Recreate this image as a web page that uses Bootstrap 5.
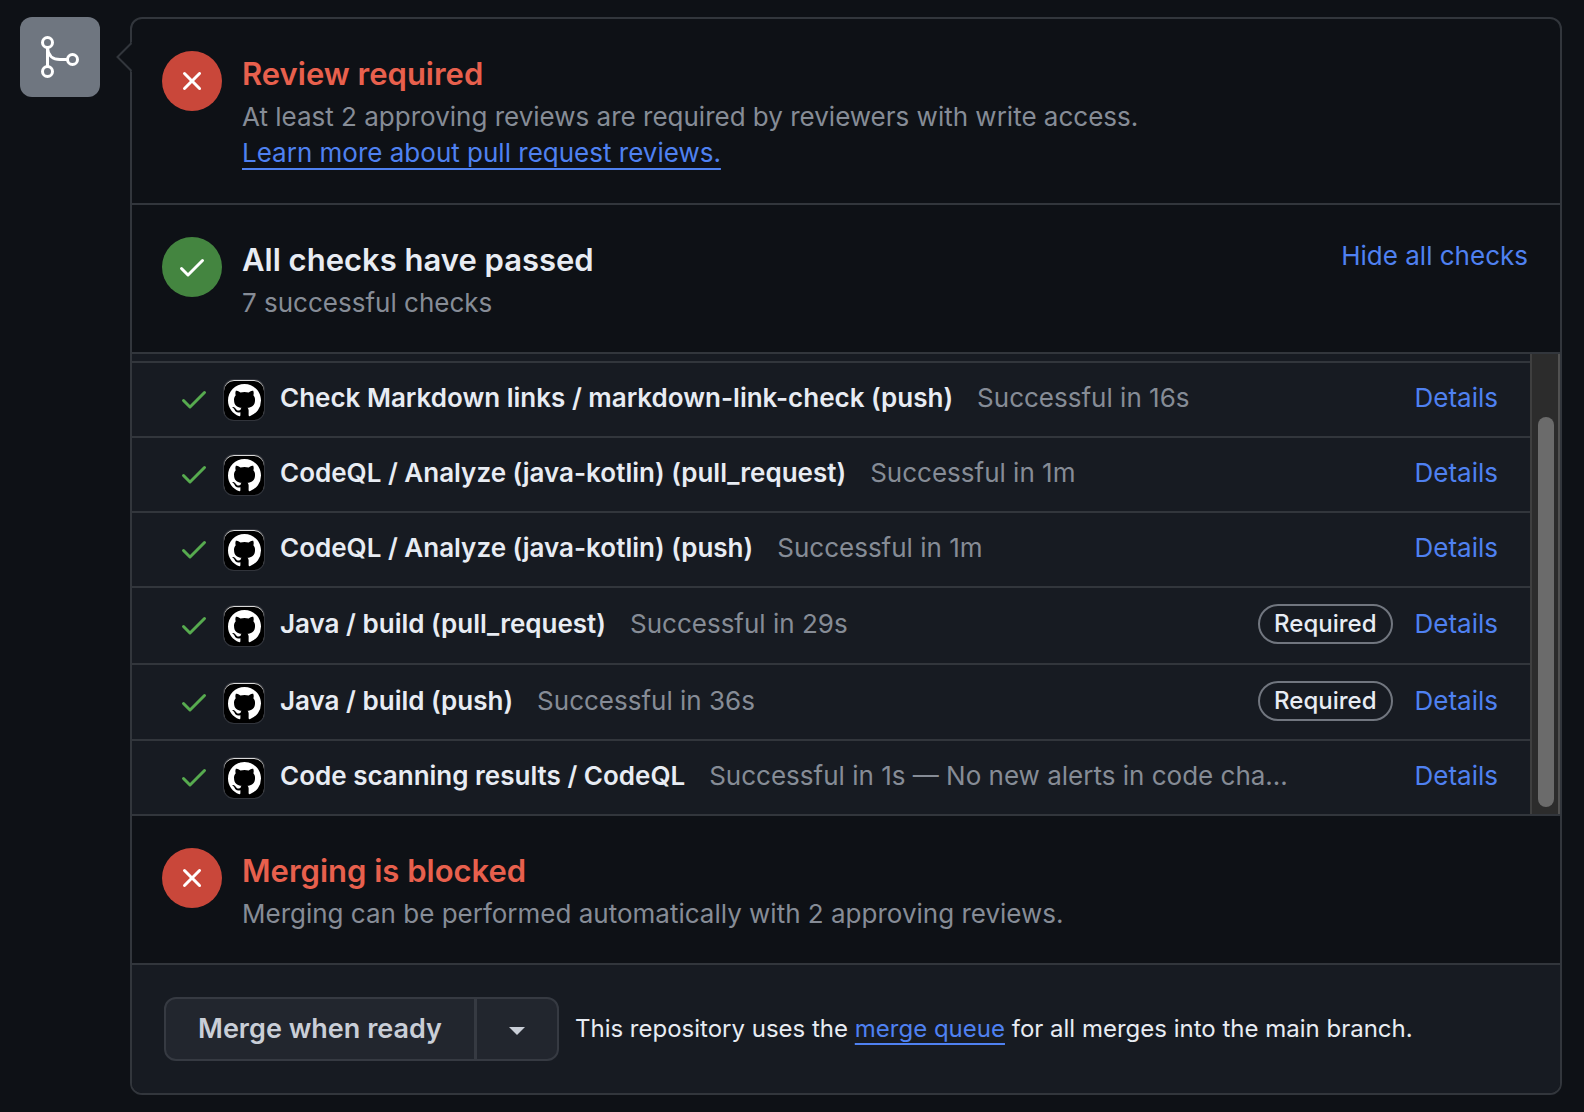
<!DOCTYPE html>
<html lang="en" data-bs-theme="dark">
<head>
<meta charset="utf-8">
<meta name="viewport" content="width=device-width, initial-scale=1">
<title>Merge status</title>
<link href="https://cdn.jsdelivr.net/npm/bootstrap@5.3.0/dist/css/bootstrap.min.css" rel="stylesheet">
<style>
  :root { --line: #32363c; --canvas: #0e1116; --inset: #171b22; --fg: #e8ecf3; --muted: #868c96; --blue: #4f81f1; --red: #e8604d; }
  body { background: var(--canvas); color: var(--fg); font-family: Inter, "Liberation Sans", sans-serif; font-size: 26px; line-height: 36px; }
  a { color: var(--blue); text-decoration: none; }
  a:hover { color: var(--blue); text-decoration: underline; }
  .timeline { padding: 17px 22px 17px 20px; gap: 30px; }
  .type-tile { width: 80px; height: 80px; border-radius: 12px; background: #6f7680; color: #fff; }
  .merge-panel { border: 2px solid var(--line); border-radius: 12px; min-width: 0; }
  .panel-caret { position: absolute; left: -16px; top: 23px; }
  .status-block { padding: 32px 32px 31px 30px; gap: 20px; border-bottom: 2px solid var(--line); }
  .status-dot { width: 60px; height: 60px; color: #fff; }
  .dot-red { background: #c9473a; }
  .dot-green { background: #448540; }
  .status-title { color: var(--fg); font-size: 31px; line-height: 46px; font-weight: 600; margin: 0 0 2px; }
  .title-red { color: var(--red); }
  .head-link { line-height: 38px; }
  .muted-text { color: var(--muted); }
  .ruled-link { text-decoration: underline; text-decoration-thickness: 2px; text-underline-offset: 6px; text-decoration-skip-ink: none; }
  .more-line { padding-bottom: 1px; }
  .checks { background: var(--inset); border-bottom: 2px solid var(--line); }
  .row-remnant { height: 7px; }
  .check-row { border-top: 2px solid var(--line); padding: 17px 32px 16px 46px; }
  .check-row.needed { padding-top: 18px; padding-bottom: 17px; }
  .check-row.needed + .needed { padding-bottom: 16px; }
  .check-icon { height: 38px; width: 32px; margin-right: 14px; color: #57ab4f; }
  .app-icon { width: 40px; height: 40px; border-radius: 10px; background: #000; color: #fff; margin-right: 16px; box-shadow: 0 0 0 1px #31343b, inset 0 1px 0 #d8d8d8; }
  .check-name { font-weight: 600; margin-right: 24px; }
  .check-side { gap: 22px; }
  .required-pill { font-size: 24px; line-height: 36px; font-weight: 500; border: 2px solid #71767f; padding: 0 14px; margin: -2px 0; }
  .scroll-track { width: 30px; background: #2c2c2c; border: solid #3f3f3f; border-width: 0 2px; border-right-color: #515151; padding: 63px 0 7px 6px; }
  .scroll-thumb { width: 16px; border-radius: 8px; background: #6b6b6b; }
  .merge-foot { background: var(--inset); padding: 32px; gap: 16px; font-size: 24px; border-radius: 0 0 10px 10px; }
  .merge-btn { --bs-btn-color: #c9ced7; --bs-btn-bg: #22262e; --bs-btn-border-color: #363a42; --bs-btn-hover-bg: #2d323b; --bs-btn-hover-color: #fff; --bs-btn-hover-border-color: #565b64; --bs-btn-border-width: 2px; --bs-btn-border-radius: 12px; --bs-btn-font-size: 27px; --bs-btn-font-weight: 600; --bs-btn-line-height: 36px; --bs-btn-padding-x: 32px; --bs-btn-padding-y: 12px; }
  .btn-group > .merge-btn:not(:first-child) { margin-left: -2px; }
</style>
</head>
<body>
<svg class="d-none" xmlns="http://www.w3.org/2000/svg">
  <symbol id="i-check" viewBox="0 0 16 16"><path fill="currentColor" d="M13.78 4.22a.75.75 0 0 1 0 1.06l-7.25 7.25a.75.75 0 0 1-1.06 0L2.22 9.28a.751.751 0 0 1 .018-1.042.751.751 0 0 1 1.042-.018L6 10.94l6.72-6.72a.75.75 0 0 1 1.06 0Z"/></symbol>
  <symbol id="i-x" viewBox="0 0 16 16"><path fill="currentColor" d="M3.72 3.72a.75.75 0 0 1 1.06 0L8 6.94l3.22-3.22a.749.749 0 0 1 1.275.326.749.749 0 0 1-.215.734L9.06 8l3.22 3.22a.749.749 0 0 1-.326 1.275.749.749 0 0 1-.734-.215L8 9.06l-3.22 3.22a.751.751 0 0 1-1.042-.018.751.751 0 0 1-.018-1.042L6.94 8 3.72 4.78a.75.75 0 0 1 0-1.06Z"/></symbol>
  <symbol id="i-mark" viewBox="0 0 16 16"><path fill="currentColor" d="M8 0C3.58 0 0 3.58 0 8c0 3.54 2.29 6.53 5.47 7.59.4.07.55-.17.55-.38 0-.19-.01-.82-.01-1.49-2.01.37-2.53-.49-2.69-.94-.09-.23-.48-.94-.82-1.13-.28-.15-.68-.52-.01-.53.63-.01 1.08.58 1.23.82.72 1.21 1.87.87 2.33.66.07-.52.28-.87.51-1.07-1.78-.2-3.64-.89-3.64-3.95 0-.87.31-1.59.82-2.15-.08-.2-.36-1.02.08-2.12 0 0 .67-.21 2.2.82.64-.18 1.32-.27 2-.27s1.36.09 2 .27c1.53-1.04 2.2-.82 2.2-.82.44 1.1.16 1.92.08 2.12.51.56.82 1.27.82 2.15 0 3.07-1.87 3.75-3.65 3.95.29.25.54.73.54 1.48 0 1.07-.01 1.93-.01 2.2 0 .21.15.46.55.38A8.01 8.01 0 0 0 16 8c0-4.42-3.58-8-8-8Z"/></symbol>
</svg>

<main class="timeline d-flex align-items-start">
  <div class="type-tile d-flex align-items-center justify-content-center flex-shrink-0">
    <svg width="48" height="48" viewBox="0 0 48 48" fill="none" stroke="currentColor" stroke-width="3" aria-hidden="true"><circle cx="11.5" cy="9.5" r="5"/><circle cx="11.5" cy="38.5" r="5"/><circle cx="36.500" cy="26.500" r="5"/><path d="M11.500 14.500V33.500M11.500 15C12 22.500 17 26.500 24 26.500H31.500"/></svg>
  </div>

  <div class="merge-panel position-relative flex-grow-1">
    <svg class="panel-caret" width="16" height="30" viewBox="0 0 16 30" aria-hidden="true"><path d="M16 0V30L14.500 28.500L1.500 15L14.500 1.500Z" fill="#0e1116"/><path d="M15.500 1L1.500 15L15.500 29" fill="none" stroke="#32363c" stroke-width="2"/></svg>

    <section class="status-block d-flex">
      <span class="status-dot dot-red rounded-circle d-flex align-items-center justify-content-center flex-shrink-0"><svg width="32" height="32" aria-hidden="true"><use href="#i-x"/></svg></span>
      <div class="flex-grow-1">
        <h3 class="status-title title-red">Review required</h3>
        <div class="muted-text">At least 2 approving reviews are required by reviewers with write access.</div>
        <div class="more-line"><a class="ruled-link" href="#">Learn more about pull request reviews.</a></div>
      </div>
    </section>

    <section class="status-block d-flex align-items-start">
      <span class="status-dot dot-green rounded-circle d-flex align-items-center justify-content-center flex-shrink-0"><svg width="32" height="32" aria-hidden="true"><use href="#i-check"/></svg></span>
      <div class="flex-grow-1">
        <h3 class="status-title">All checks have passed</h3>
        <div class="muted-text">7 successful checks</div>
      </div>
      <a class="head-link" href="#">Hide all checks</a>
    </section>

    <div class="checks d-flex overflow-hidden">
      <div class="flex-grow-1">
        <div class="row-remnant"></div>
        <div class="check-row d-flex align-items-start">
          <span class="check-icon d-flex align-items-center"><svg width="32" height="32" aria-hidden="true"><use href="#i-check"/></svg></span>
          <span class="app-icon d-flex align-items-center justify-content-center flex-shrink-0"><svg width="33" height="33" aria-hidden="true"><use href="#i-mark"/></svg></span>
          <span class="check-name">Check Markdown links / markdown-link-check (push)</span><span class="muted-text">Successful in 16s</span>
          <span class="check-side d-flex ms-auto"><a href="#">Details</a></span>
        </div>
        <div class="check-row d-flex align-items-start">
          <span class="check-icon d-flex align-items-center"><svg width="32" height="32" aria-hidden="true"><use href="#i-check"/></svg></span>
          <span class="app-icon d-flex align-items-center justify-content-center flex-shrink-0"><svg width="33" height="33" aria-hidden="true"><use href="#i-mark"/></svg></span>
          <span class="check-name">CodeQL / Analyze (java-kotlin) (pull_request)</span><span class="muted-text">Successful in 1m</span>
          <span class="check-side d-flex ms-auto"><a href="#">Details</a></span>
        </div>
        <div class="check-row d-flex align-items-start">
          <span class="check-icon d-flex align-items-center"><svg width="32" height="32" aria-hidden="true"><use href="#i-check"/></svg></span>
          <span class="app-icon d-flex align-items-center justify-content-center flex-shrink-0"><svg width="33" height="33" aria-hidden="true"><use href="#i-mark"/></svg></span>
          <span class="check-name">CodeQL / Analyze (java-kotlin) (push)</span><span class="muted-text">Successful in 1m</span>
          <span class="check-side d-flex ms-auto"><a href="#">Details</a></span>
        </div>
        <div class="check-row needed d-flex align-items-start">
          <span class="check-icon d-flex align-items-center"><svg width="32" height="32" aria-hidden="true"><use href="#i-check"/></svg></span>
          <span class="app-icon d-flex align-items-center justify-content-center flex-shrink-0"><svg width="33" height="33" aria-hidden="true"><use href="#i-mark"/></svg></span>
          <span class="check-name">Java / build (pull_request)</span><span class="muted-text">Successful in 29s</span>
          <span class="check-side d-flex align-items-start ms-auto"><span class="required-pill rounded-pill">Required</span><a href="#">Details</a></span>
        </div>
        <div class="check-row needed d-flex align-items-start">
          <span class="check-icon d-flex align-items-center"><svg width="32" height="32" aria-hidden="true"><use href="#i-check"/></svg></span>
          <span class="app-icon d-flex align-items-center justify-content-center flex-shrink-0"><svg width="33" height="33" aria-hidden="true"><use href="#i-mark"/></svg></span>
          <span class="check-name">Java / build (push)</span><span class="muted-text">Successful in 36s</span>
          <span class="check-side d-flex align-items-start ms-auto"><span class="required-pill rounded-pill">Required</span><a href="#">Details</a></span>
        </div>
        <div class="check-row d-flex align-items-start">
          <span class="check-icon d-flex align-items-center"><svg width="32" height="32" aria-hidden="true"><use href="#i-check"/></svg></span>
          <span class="app-icon d-flex align-items-center justify-content-center flex-shrink-0"><svg width="33" height="33" aria-hidden="true"><use href="#i-mark"/></svg></span>
          <span class="check-name">Code scanning results / CodeQL</span><span class="muted-text">Successful in 1s — No new alerts in code cha...</span>
          <span class="check-side d-flex ms-auto"><a href="#">Details</a></span>
        </div>
      </div>
      <div class="scroll-track d-flex flex-shrink-0"><div class="scroll-thumb"></div></div>
    </div>

    <section class="status-block d-flex">
      <span class="status-dot dot-red rounded-circle d-flex align-items-center justify-content-center flex-shrink-0"><svg width="32" height="32" aria-hidden="true"><use href="#i-x"/></svg></span>
      <div class="flex-grow-1">
        <h3 class="status-title title-red">Merging is blocked</h3>
        <div class="muted-text">Merging can be performed automatically with 2 approving reviews.</div>
      </div>
    </section>

    <div class="merge-foot d-flex align-items-center">
      <div class="btn-group flex-shrink-0">
        <button type="button" class="btn merge-btn">Merge when ready</button>
        <button type="button" class="btn merge-btn" aria-label="Select merge method"><svg class="d-block" width="16" height="36" viewBox="0 0 16 36" aria-hidden="true"><path d="M0 16H16L8 24Z" fill="currentColor"/></svg></button>
      </div>
      <div>This repository uses the <a class="ruled-link" href="#">merge queue</a> for all merges into the main branch.</div>
    </div>
  </div>
</main>
<script src="https://cdn.jsdelivr.net/npm/bootstrap@5.3.0/dist/js/bootstrap.bundle.min.js"></script>
</body>
</html>
